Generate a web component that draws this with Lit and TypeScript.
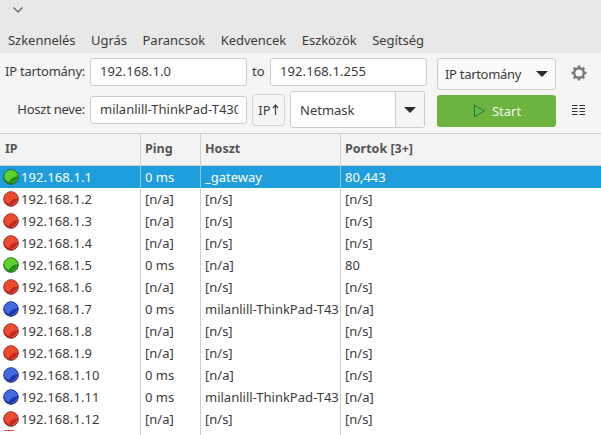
import { LitElement, html, css, svg } from "lit";
import { customElement } from "lit/decorators.js";

type Row = [string, string, string, string, string];
const rows: Row[] = [
  ["g", "192.168.1.1", "0 ms", "_gateway", "80,443"],
  ["r", "192.168.1.2", "[n/a]", "[n/s]", "[n/s]"],
  ["r", "192.168.1.3", "[n/a]", "[n/s]", "[n/s]"],
  ["r", "192.168.1.4", "[n/a]", "[n/s]", "[n/s]"],
  ["g", "192.168.1.5", "0 ms", "[n/a]", "80"],
  ["r", "192.168.1.6", "[n/a]", "[n/s]", "[n/s]"],
  ["b", "192.168.1.7", "0 ms", "milanlill-ThinkPad-T43", "[n/a]"],
  ["r", "192.168.1.8", "[n/a]", "[n/s]", "[n/s]"],
  ["r", "192.168.1.9", "[n/a]", "[n/s]", "[n/s]"],
  ["b", "192.168.1.10", "0 ms", "[n/a]", "[n/s]"],
  ["b", "192.168.1.11", "0 ms", "milanlill-ThinkPad-T43", "[n/a]"],
  ["r", "192.168.1.12", "[n/a]", "[n/s]", "[n/s]"],
];

const palette: Record<string, [string, string, string]> = {
  r: ["#ee4a30", "#c8261a", "#7d3a32"],
  g: ["#5fd02c", "#1f9012", "#2a5f22"],
  b: ["#4468e0", "#1c36b0", "#283a70"],
};

const dot = (k: string) => {
  const [a, b, c] = palette[k];
  return html`<svg class="dot" width="16" height="16" viewBox="0 0 16 16">
    ${svg`<circle cx="8" cy="8" r="7.300" fill=${b} stroke=${c} stroke-width="1"/>
    <path d="M1.300 7.600A6.700 6.700 0 0 1 14.700 7.600C11.500 7.200 8.300 8.800 5.800 13 3 12 1.400 10 1.300 7.600Z" fill=${a}/>
    <path d="M9.400 14C11.500 13.500 13.300 11.800 14 9.800" stroke="#fff" stroke-opacity=".3" fill="none"/>`}
  </svg>`;
};

@customElement("app-root")
export class AppRoot extends LitElement {
  static styles = css`
    :host {
      display: block;
      width: 601px;
      height: 435px;
      overflow: hidden;
      background: #fff;
      font-family: "Noto Sans", "Open Sans", sans-serif;
      font-size: 13px;
      color: #3c3c3c;
    }
    .title {
      height: 30px;
      box-sizing: border-box;
      padding: 2px 0 0 12px;
      background: #e8e8e8;
    }
    .menu {
      height: 23px;
      background: #e8e8e8;
      display: flex;
      gap: 15.5px;
      padding-left: 8px;
      line-height: 20px;
      letter-spacing: -0.03px;
    }
    .tools {
      height: 81px;
      box-sizing: border-box;
      background: #f5f5f5;
      padding-top: 5px;
      border-bottom: 1px solid #cfcfcf;
    }
    .row {
      display: flex;
      align-items: flex-start;
    }
    .r1 { height: 33px; }
    .lab {
      width: 85px;
      margin-right: 5px;
      text-align: right;
      white-space: nowrap;
      line-height: 27px;
      letter-spacing: -0.25px;
    }
    .r2 .lab { margin-top: 5px; }
    .input {
      box-sizing: border-box;
      width: 157px;
      height: 28px;
      background: #fff;
      border: 1px solid #cdcdcd;
      border-radius: 3px;
      padding: 0 8px 0 9px;
      line-height: 25px;
      overflow: hidden;
      white-space: nowrap;
    }
    .r2 .input { margin-top: 5px; }
    .clip { display: block; overflow: hidden; }
    .to { width: 23px; padding-left: 5px; box-sizing: border-box; line-height: 27px; }
    .second { margin-right: 10px; }
    .select {
      box-sizing: border-box;
      width: 119px;
      height: 32px;
      background: #fafafa;
      border: 1px solid #cdcdcd;
      border-radius: 3px;
      display: flex;
      align-items: center;
      justify-content: space-between;
      padding: 0 0 0 7px;
      letter-spacing: -0.3px;
    }
    .caret { width: 0; height: 0; border-left: 6px solid transparent; border-right: 6px solid transparent; border-top: 6px solid #2d2d2d; }
    .select .caret { margin-right: 7px; }
    .side { width: 45px; display: flex; justify-content: center; align-items: center; }
    .r1 .side { height: 30px; }
    .r2 .side { height: 38px; }
    .sort {
      box-sizing: border-box;
      width: 33px;
      height: 32px;
      margin: 3px 5px 0 5px;
      border: 1px solid #d4d4d4;
      border-radius: 3px;
      display: flex;
      align-items: center;
      justify-content: center;
      gap: 1px;
      padding-bottom: 1px;
    }
    .combo {
      box-sizing: border-box;
      width: 135px;
      height: 37px;
      margin-right: 12px;
      display: flex;
      background: #fff;
      border: 1px solid #cdcdcd;
      border-radius: 3px;
      align-items: stretch;
    }
    .combo-text { flex: 1; padding-left: 9px; line-height: 36px; }
    .combo-btn {
      width: 28px;
      background: #f5f5f5;
      border-left: 1px solid #cdcdcd;
      display: flex;
      align-items: center;
      justify-content: center;
    }
    .start {
      box-sizing: border-box;
      width: 119px;
      height: 32px;
      margin-top: 4px;
      background: #6db33f;
      border-radius: 3px;
      color: #f2f7ec;
      display: flex;
      align-items: center;
      justify-content: center;
      gap: 6px;
      padding-left: 1px;
    }
    .grid {
      display: grid;
      grid-template-columns: 141px 60px 140px 260px;
    }
    .head > div {
      box-sizing: border-box;
      height: 32px;
      background: #f3f3f3;
      border-right: 1px solid #cfcfcf;
      border-bottom: 1px solid #cfcfcf;
      font-weight: 700;
      font-size: 12.5px;
      color: #555;
      padding-left: 4px;
      line-height: 30px;
    }
    .head > div:first-child { padding-left: 5px; }
    .head > div:last-child { border-right: 0; }
    .line > div {
      box-sizing: border-box;
      height: 22px;
      line-height: 22px;
      padding-left: 4px;
      border-right: 1px solid #cfcfcf;
      overflow: hidden;
      white-space: nowrap;
    }
    .line > div:last-child { border-right: 0; }
    .line .ip { padding-left: 3px; display: flex; align-items: center; gap: 2px; }
    .dot { flex: none; }
    .line.sel > div { background: #1f9ede; color: #fff; border-right-color: #8cc8ea; }
    .num { letter-spacing: 0.1px; }
    .stub { height: 1px; padding-left: 7px; }
    .stub i { display: block; width: 10px; height: 1px; background: #d94a36; }
  `;

  render() {
    return html`
      <div class="title">
        <svg width="12" height="12" viewBox="0 0 12 12"><path d="M1.500 3.500 6 8 10.500 3.500" fill="none" stroke="#555" stroke-width="1.100"/></svg>
      </div>
      <div class="menu">
        <span>Szkennelés</span><span>Ugrás</span><span>Parancsok</span><span>Kedvencek</span><span>Eszközök</span><span>Segítség</span>
      </div>
      <div class="tools">
        <div class="row r1">
          <div class="lab">IP tartomány:</div>
          <div class="input"><span class="num">192.168.1.0</span></div>
          <div class="to">to</div>
          <div class="input second"><span class="num">192.168.1.255</span></div>
          <div class="select"><span>IP tartomány</span><span class="caret"></span></div>
          <div class="side">
            <svg width="22" height="22" viewBox="0 0 22 22">
              <circle cx="11" cy="11" r="4.800" fill="none" stroke="#7a7a7a" stroke-width="2.400"/>
              <path d="M11 3.500V6M11 16V18.500M3.500 11H6M16 11H18.500M5.700 5.700 7.500 7.500M14.500 14.500 16.300 16.300M16.300 5.700 14.500 7.500M7.500 14.500 5.700 16.300" stroke="#7a7a7a" stroke-width="2.600"/>
            </svg>
          </div>
        </div>
        <div class="row r2">
          <div class="lab">Hoszt neve:</div>
          <div class="input"><span class="clip">milanlill-ThinkPad-T430</span></div>
          <div class="sort"><span>IP</span><svg width="7" height="13" viewBox="0 0 7 13"><path d="M3.500 2V12M1 5 3.500 2 6 5" fill="none" stroke="#444" stroke-width="1.200"/></svg></div>
          <div class="combo">
            <div class="combo-text">Netmask</div>
            <div class="combo-btn"><span class="caret"></span></div>
          </div>
          <div class="start">
            <svg width="13" height="14" viewBox="0 0 13 14"><path d="M1.500 1.200 11.500 7 1.500 12.800Z" fill="#58c04a" stroke="#2f6f2c" stroke-width="1"/></svg>
            <span>Start</span>
          </div>
          <div class="side">
            <svg width="13" height="12" viewBox="0 0 13 12"><path d="M0 1.500H5.500M7.500 1.500H13M0 4.500H5.500M7.500 4.500H13M0 7.500H5.500M7.500 7.500H13M0 10.500H5.500M7.500 10.500H13" stroke="#333" stroke-width="1"/></svg>
          </div>
        </div>
      </div>
      <div class="grid head">
        <div>IP</div><div>Ping</div><div>Hoszt</div><div>Portok [3+]</div>
      </div>
      ${rows.map(
        (r, i) => html`<div class="grid line ${i === 0 ? "sel" : ""}">
          <div class="ip">${dot(r[0])}<span class="num">${r[1]}</span></div>
          <div>${r[2]}</div>
          <div>${r[3]}</div>
          <div>${r[4]}</div>
        </div>`
      )}
      <div class="grid line">
        <div class="stub"><i></i></div>
        <div class="stub"></div>
        <div class="stub"></div>
        <div class="stub"></div>
      </div>
    `;
  }
}
